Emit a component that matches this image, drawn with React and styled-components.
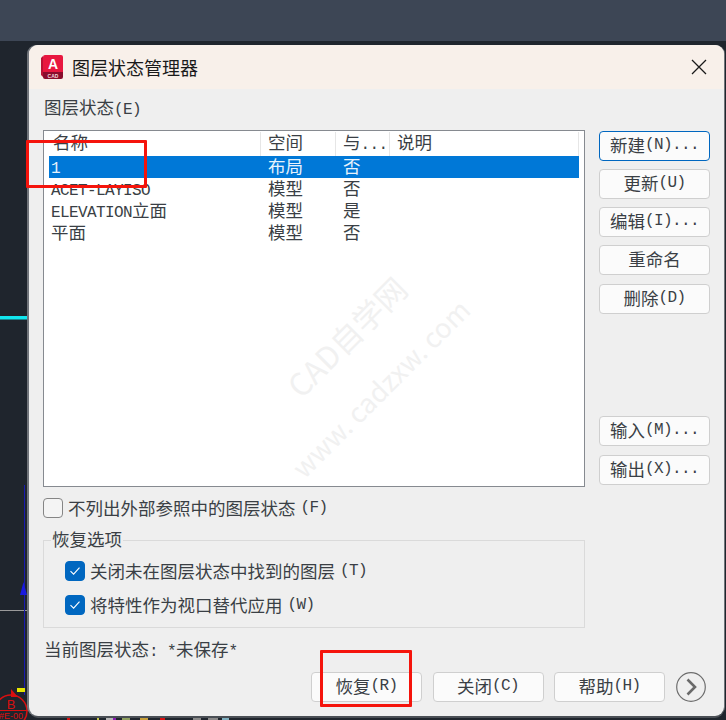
import React from 'react';
import styled, { createGlobalStyle } from 'styled-components';

const CJK = '"Noto Sans CJK SC", sans-serif';
const LATIN = '"Liberation Mono", "Noto Sans CJK SC", monospace';

const GlobalStyle = createGlobalStyle`
  html, body {
    margin: 0;
    padding: 0;
    background: #1f252d;
    overflow: hidden;
  }
  * {
    box-sizing: border-box;
  }
`;

const Stage = styled.div`
  position: relative;
  width: 726px;
  height: 720px;
  overflow: hidden;
  background: #1f252d;
  padding: 45px 2px 4px 29px;
`;

const TopBar = styled.div`
  position: absolute;
  left: 0;
  top: 0;
  width: 726px;
  height: 41px;
  background: #3d4655;
`;

const Drawing = styled.svg`
  position: absolute;
  left: 0;
  top: 0;
`;

const Win = styled.div`
  position: relative;
  height: 100%;
  display: flex;
  flex-direction: column;
  background: #efefef;
  border-radius: 9px;
  overflow: hidden;
  box-shadow: -2px 0 0 #70747a, 0 2px 0 #4a4f55, 1px 0 0 #70747a;
  font-family: ${CJK};
  font-size: 17.5px;
  color: #3a3f45;
`;

const TitleBar = styled.div`
  flex: none;
  height: 44px;
  background: #f8f0ea;
  display: flex;
  align-items: center;
  padding: 0 17px 0 12px;
`;

const AppIcon = styled.svg`
  flex: none;
  margin-right: 9px;
`;

const Title = styled.div`
  flex: 1;
  font-size: 18px;
  line-height: 24px;
  color: #1a1a1a;
`;

const Body = styled.div`
  flex: 1;
  display: flex;
  flex-direction: column;
  padding: 8px 14px 14px 14px;
`;

const Lat = styled.span`
  font-family: ${LATIN};
  font-size: 16px;
  letter-spacing: -0.6px;
`;

const SectionLabel = styled.div`
  height: 20px;
  line-height: 20px;
  margin: 0 0 13px 1px;
`;

const Main = styled.div`
  display: flex;
  gap: 14px;
  height: 357px;
`;

const List = styled.div`
  position: relative;
  width: 542px;
  height: 357px;
  background: #fff;
  border: 1px solid #868a90;
  padding: 1px 5px 0;
  overflow: hidden;
`;

const Row = styled.div`
  display: grid;
  grid-template-columns: 212px 75px 54px 1fr;
  height: ${p => (p.$head ? '24px' : '22px')};
  line-height: 20px;
  background: ${p => (p.$selected ? '#0078d7' : 'transparent')};
  color: ${p => (p.$selected ? '#e8f3fc' : 'inherit')};
`;

const Cell = styled.div`
  padding-left: ${p => p.$pad}px;
  white-space: nowrap;
  border-right: ${p => (p.$head ? '1px solid #e6e6e6' : 'none')};
`;

const Watermark = styled.div`
  position: absolute;
  left: ${p => p.$x}px;
  top: ${p => p.$y}px;
  font-size: ${p => p.$size}px;
  line-height: 1;
  color: #f1f1f1;
  white-space: nowrap;
  transform: translate(-50%, -50%) rotate(-45deg);
`;

const SideButtons = styled.div`
  width: 111px;
  display: flex;
  flex-direction: column;
  gap: 8px;
  padding-top: 1px;
`;

const Spacer = styled.div`
  flex: none;
  height: 86px;
`;

const Btn = styled.div`
  flex: none;
  width: 111px;
  height: 30px;
  margin-top: ${p => (p.$nudge ? '1px' : '0')};
  display: flex;
  align-items: center;
  justify-content: center;
  background: #fbfbfb;
  border: 1px solid ${p => (p.$primary ? '#0067c0' : '#cfcfcf')};
  border-radius: 4px;
  line-height: 26px;
  padding-bottom: 2px;
  white-space: nowrap;
`;

const Check = styled.div`
  flex: none;
  width: 20px;
  height: 20px;
  border-radius: 4px;
  display: flex;
  align-items: center;
  justify-content: center;
  background: ${p => (p.$on ? '#0067c0' : '#f4f4f4')};
  border: 1px solid ${p => (p.$on ? '#0067c0' : '#858585')};
`;

const CheckRow = styled.div`
  display: flex;
  align-items: center;
  gap: 5px;
  height: 20px;
  line-height: 20px;
  white-space: nowrap;
`;

const TopCheck = styled(CheckRow)`
  margin-top: 11px;
  line-height: 18px;
`;

const Group = styled.fieldset`
  margin: 12px 0 0;
  width: 542px;
  height: 98px;
  padding: 0;
  border: 1px solid #dadada;
`;

const Legend = styled.legend`
  margin-left: 7px;
  padding: 0 1px;
  height: 20px;
  line-height: 18px;
`;

const GroupInner = styled.div`
  display: flex;
  flex-direction: column;
  gap: 14px;
  padding: 11px 0 0 21px;
`;

const Status = styled.div`
  margin: 12px 0 0 1px;
  height: 20px;
  line-height: 18px;
  white-space: nowrap;
`;

const Footer = styled.div`
  display: flex;
  align-items: center;
  gap: 10.5px;
  margin-top: 12px;
  padding-left: 268px;
`;

const More = styled.svg`
  flex: none;
`;

const Annotation = styled.div`
  position: absolute;
  left: ${p => p.$x}px;
  top: ${p => p.$y}px;
  width: ${p => p.$w}px;
  height: ${p => p.$h}px;
  border: 3px solid #f5140c;
  border-radius: 1px;
`;

const tick = (
  <svg width="12" height="10" viewBox="0 0 12 10">
    <path d="M1.5 5.2 L4.6 8.2 L10.5 1.6" fill="none" stroke="#fff" strokeWidth="1.1" />
  </svg>
);

const rows = [
  { name: <Lat>1</Lat>, space: '布局', vp: '否', selected: true },
  { name: <Lat>ACET-LAYISO</Lat>, space: '模型', vp: '否' },
  { name: <><Lat>ELEVATION</Lat>立面</>, space: '模型', vp: '是' },
  { name: '平面', space: '模型', vp: '否' },
];

export default function App() {
  return (
    <Stage>
      <GlobalStyle />
      <TopBar />
      {/* cad drawing behind the dialog */}
      <Drawing width="726" height="720" viewBox="0 0 726 720">
        <rect x="0" y="316" width="29" height="3.5" fill="#12e6ee" />
        <line x1="0" y1="610.5" x2="30" y2="610.5" stroke="#9a9a9a" strokeWidth="1" />
        <line x1="24.5" y1="485" x2="24.5" y2="695" stroke="#1a1ab0" strokeWidth="1" />
        <path d="M23.5 582 L20 595 L27 595 Z" fill="#1a1ae0" />
        <rect x="17" y="688" width="8" height="4" fill="#e6e600" />
        <circle cx="11" cy="711" r="16" fill="none" stroke="#d81010" strokeWidth="1.5" />
        <path d="M11 689 L18 697 L11 697 Z" fill="#d81010" />
        <line x1="0" y1="710.5" x2="30" y2="710.5" stroke="#d81010" strokeWidth="1" />
        <text x="11" y="709" fontSize="13" fill="#d81010" textAnchor="middle" fontFamily="Liberation Sans, sans-serif">B</text>
        <text x="11" y="719" fontSize="9" fill="#d81010" textAnchor="middle" fontFamily="Liberation Sans, sans-serif">#E-00</text>
        <rect x="67" y="718" width="3" height="2" fill="#d81010" />
        <rect x="97" y="717" width="2" height="3" fill="#c8c84a" />
        <rect x="106" y="718" width="8" height="2" fill="#b8b8b8" />
        <rect x="113" y="718" width="3" height="2" fill="#8a1ab0" />
        <rect x="122" y="718" width="8" height="2" fill="#8fa060" />
        <rect x="140" y="718" width="8" height="2" fill="#c8a03a" />
        <rect x="160" y="718" width="5" height="2" fill="#d81010" />
        <rect x="193" y="718" width="8" height="2" fill="#8a8a8a" />
        <rect x="208" y="718" width="10" height="2" fill="#8a8a8a" />
        <rect x="222" y="718" width="7" height="2" fill="#7fb0c0" />
      </Drawing>
      <Win>
        <TitleBar>
          <AppIcon width="22" height="24" viewBox="0 0 22 24">
            <path d="M2 2 Q2 0 4 0 L20 0 Q22 0 22 2 L22 17 L2 17 Z" fill="#e8173f" />
            <path d="M0 3 L2 1 L2 22 L0 20 Z" fill="#b81235" />
            <path d="M2 17 L22 17 L22 22 Q22 24 20 24 L4 24 Q2 24 2 22 Z" fill="#8a0c2c" />
            <text x="12" y="14" fontSize="14" fontWeight="700" fill="#fff" textAnchor="middle" fontFamily="Liberation Sans, sans-serif">A</text>
            <text x="12" y="22.5" fontSize="5" fontWeight="700" fill="#f3d6dc" textAnchor="middle" fontFamily="Liberation Sans, sans-serif">CAD</text>
          </AppIcon>
          <Title>图层状态管理器</Title>
          <svg width="16" height="16" viewBox="0 0 16 16">
            <path d="M1 1 L15 15 M15 1 L1 15" stroke="#1a1a1a" strokeWidth="1.3" fill="none" />
          </svg>
        </TitleBar>
        <Body>
          <SectionLabel>图层状态<Lat>(E)</Lat></SectionLabel>
          <Main>
            <List>
              <Row $head>
                <Cell $head $pad={4}>名称</Cell>
                <Cell $head $pad={7}>空间</Cell>
                <Cell $head $pad={7}>与<Lat>...</Lat></Cell>
                <Cell $head $pad={7}>说明</Cell>
              </Row>
              {rows.map((r, i) => (
                <Row key={i} $selected={r.selected}>
                  <Cell $pad={2}>{r.name}</Cell>
                  <Cell $pad={7}>{r.space}</Cell>
                  <Cell $pad={7}>{r.vp}</Cell>
                  <Cell />
                </Row>
              ))}
              <Watermark $x={302} $y={205} $size={31}>CAD自学网</Watermark>
              <Watermark $x={336} $y={257} $size={27}>www. cadzxw. com</Watermark>
            </List>
            <SideButtons>
              <Btn $primary>新建<Lat>(N)...</Lat></Btn>
              <Btn>更新<Lat>(U)</Lat></Btn>
              <Btn>编辑<Lat>(I)...</Lat></Btn>
              <Btn>重命名</Btn>
              <Btn $nudge>删除<Lat>(D)</Lat></Btn>
              <Spacer />
              <Btn>输入<Lat>(M)...</Lat></Btn>
              <Btn $nudge>输出<Lat>(X)...</Lat></Btn>
            </SideButtons>
          </Main>
          <TopCheck>
            <Check />
            不列出外部参照中的图层状态<Lat>(F)</Lat>
          </TopCheck>
          <Group>
            <Legend>恢复选项</Legend>
            <GroupInner>
              <CheckRow>
                <Check $on>{tick}</Check>
                关闭未在图层状态中找到的图层<Lat>(T)</Lat>
              </CheckRow>
              <CheckRow>
                <Check $on>{tick}</Check>
                将特性作为视口替代应用<Lat>(W)</Lat>
              </CheckRow>
            </GroupInner>
          </Group>
          <Status>当前图层状态<Lat>: *</Lat>未保存<Lat>*</Lat></Status>
          <Footer>
            <Btn>恢复<Lat>(R)</Lat></Btn>
            <Btn>关闭<Lat>(C)</Lat></Btn>
            <Btn>帮助<Lat>(H)</Lat></Btn>
            <More width="30" height="30" viewBox="0 0 30 30">
              <circle cx="15" cy="15" r="14.3" fill="none" stroke="#6e6e6e" strokeWidth="1.2" />
              <path d="M11.5 7.5 L19 15 L11.5 22.5" fill="none" stroke="#6a6a6a" strokeWidth="2.6" />
            </More>
          </Footer>
        </Body>
      </Win>
      <Annotation $x={26} $y={140} $w={121} $h={48} />
      <Annotation $x={320} $y={650} $w={92} $h={57} />
    </Stage>
  );
}
